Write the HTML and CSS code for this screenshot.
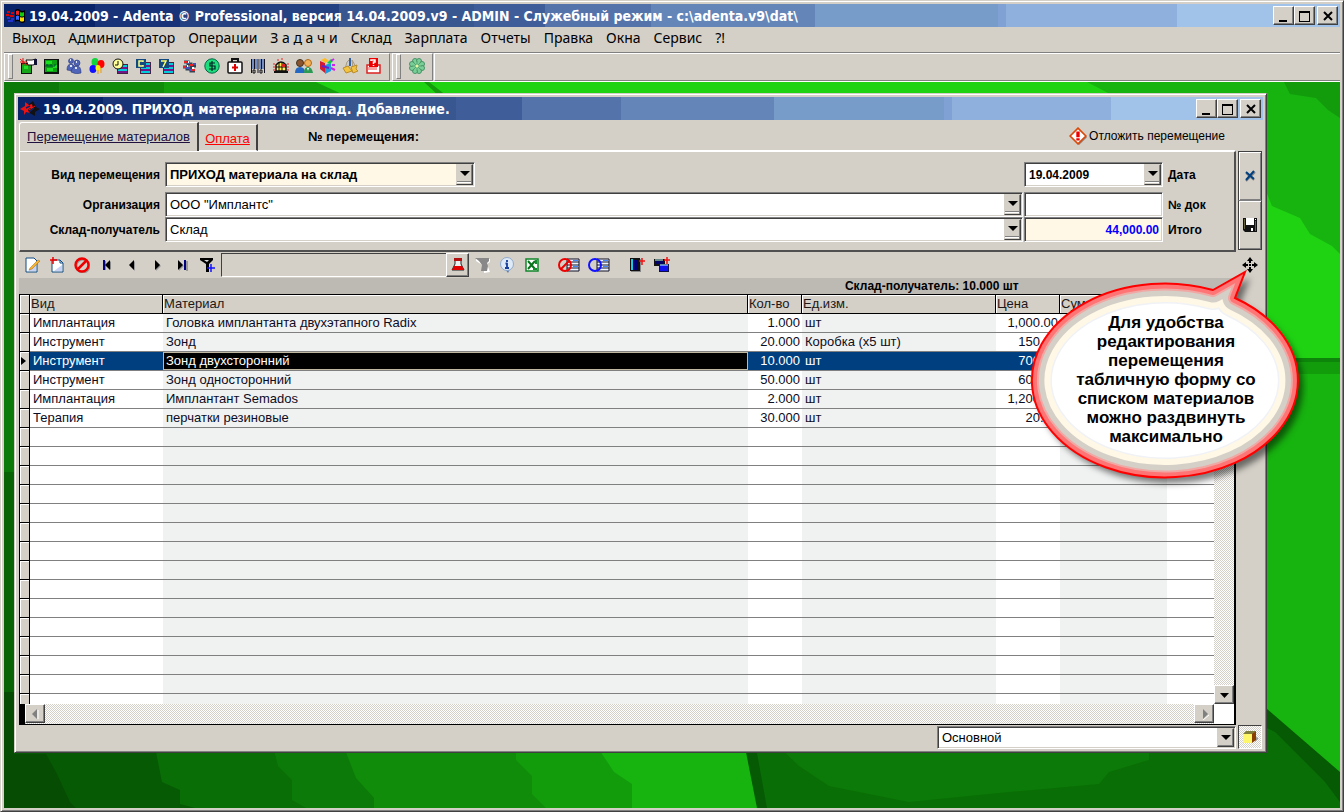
FILE: index.html
```html
<!DOCTYPE html>
<html lang="ru">
<head>
<meta charset="utf-8">
<title>Adenta Professional</title>
<link rel="stylesheet" href="styles.css">
</head>
<body>
<div class="app frame">
  <header class="titlebar">
    <svg class="title-icon" viewBox="0 0 20 16"><path d="M9 2q3-2 5 0t5 0v12q-3 2-5 0t-5 0z" fill="#000"/><path d="M10 3q2-1 3 0v4q-2-1-3 0z" fill="#e22"/><path d="M14 4q2 1 4 0v4q-2 1-4 0z" fill="#1c1"/><path d="M10 8q2-1 3 0v4q-2-1-3 0z" fill="#36f"/><path d="M14 9q2 1 4 0v4q-2 1-4 0z" fill="#fd0"/><path d="M1 4h3M5 5h3M0 7h3M4 8h4" stroke="#d00" stroke-width="2"/><path d="M1 10h3M5 11h3M2 13h5" stroke="#23c" stroke-width="2"/></svg>
    <h1 class="title-text">19.04.2009 - Adenta © Professional, версия 14.04.2009.v9 - ADMIN - Служебный режим - c:\adenta.v9\dat\</h1>
    <div class="win-buttons">
      <button class="win-btn" aria-label="Свернуть"><svg viewBox="0 0 14 14"><path d="M2 11h8v2H2z"/></svg></button>
      <button class="win-btn" aria-label="Развернуть"><svg viewBox="0 0 14 14"><path d="M1 2h11v11H1zM2 4v8h9V4z" fill-rule="evenodd"/></svg></button>
      <button class="win-btn win-close" aria-label="Закрыть"><svg viewBox="0 0 14 14"><path d="M3 3l8 8M11 3l-8 8" stroke="#000" stroke-width="2"/></svg></button>
    </div>
  </header>
  <nav class="menu">
    <button>Выход</button><button>Администратор</button><button>Операции</button><button>З а д а ч и</button><button>Склад</button><button>Зарплата</button><button>Отчеты</button><button>Правка</button><button>Окна</button><button>Сервис</button><button>?!</button>
  </nav>
  <div class="toolbars">
    <div class="toolbar toolbar-main">
      <button class="tool" aria-label="Настройка"><svg viewBox="0 0 18 16"><path d="M2 5h11v11H2z" fill="#111"/><path d="M3 6h9v9H3z" fill="#17a51a"/><path d="M5 8h4v3H5z" fill="#22e02a"/><path d="M7 2h6l4-1v5l-3 1H9z" fill="#fff" stroke="#111"/><path d="M15 1h3v6h-3z" fill="#113"/><path d="M1 1l7 6M4 0v7M1 4h7" stroke="#d11"/></svg></button>
      <button class="tool" aria-label="Карта"><svg viewBox="0 0 16 16"><path d="M1 1h15v15H1z" fill="#111"/><path d="M2 2h12v12H2z" fill="#0c9f14"/><path d="M3 3h6v3H3zM10 7h4v3h-4zM4 10h6v3H4z" fill="#18df20"/><path d="M3 9V7h2v2M7 9V7h2v2M11 9V7h2" fill="none" stroke="#053"/></svg></button>
      <button class="tool" aria-label="Пациенты"><svg viewBox="0 0 16 16"><g fill="#5165b8" stroke="#28387e" stroke-width=".6"><circle cx="5" cy="3" r="2.500"/><path d="M1 12q0-6 4-6 3 0 4 4l-2 3z"/><circle cx="11" cy="5" r="3"/><path d="M5 14q1-6 6-6 4 0 4 7-5 2-10-1z"/></g><path d="M4 2h1M10 4h1M4 8h2M9 10h2" stroke="#dfe6ff" stroke-width="2"/></svg></button>
      <button class="tool" aria-label="Шары"><svg viewBox="0 0 16 16"><ellipse cx="6" cy="4" rx="3.500" ry="4" fill="#12d43c"/><ellipse cx="12" cy="6" rx="3.500" ry="4" fill="#f00"/><ellipse cx="4" cy="11" rx="3.500" ry="4" fill="#11f"/><ellipse cx="9" cy="10" rx="2.500" ry="3" fill="#fe1"/><path d="M9 12v4M12 10v5" stroke="#e90"/></svg></button>
      <button class="tool" aria-label="Расписание"><svg viewBox="0 0 16 16"><path d="M5 6h11v10H5z" fill="#424"/><path d="M6 8h9M6 12h9" stroke="#0cd" stroke-width="2"/><path d="M6 10h9M6 14h9" stroke="#70188a" stroke-width="2"/><circle cx="6" cy="6" r="5" fill="#ff9" stroke="#111"/><path d="M6 3v4H3" fill="none" stroke="#111"/></svg></button>
      <button class="tool" aria-label="Карточки C"><svg viewBox="0 0 16 16"><path d="M5 4h11v12H5z" fill="#424"/><path d="M6 6h9M6 10h9M6 14h9" stroke="#0cd" stroke-width="2"/><path d="M6 8h9M6 12h9" stroke="#70188a" stroke-width="2"/><path d="M1 1h10v9H1z" fill="#124a80"/><path d="M8 4V3H4v5h4V7" fill="none" stroke="#ff8" stroke-width="1.500"/></svg></button>
      <button class="tool" aria-label="Карточки 7"><svg viewBox="0 0 16 16"><path d="M5 4h11v12H5z" fill="#424"/><path d="M6 6h9M6 10h9M6 14h9" stroke="#0cd" stroke-width="2"/><path d="M6 8h9M6 12h9" stroke="#70188a" stroke-width="2"/><path d="M1 1h10v9H1z" fill="#124a80"/><path d="M3 3h5L5 9" fill="none" stroke="#ff6" stroke-width="1.500"/></svg></button>
      <button class="tool" aria-label="Обмен"><svg viewBox="0 0 16 16"><path d="M3 4h4v2h3v2h5M2 9h4v2h4v2h4" fill="none" stroke="#345" stroke-width="3"/><path d="M3 4h3M9 7h3M2 9h3M10 12h4" stroke="#e22" stroke-width="2"/><path d="M6 5h3M12 6h3M5 10h4M8 12h2" stroke="#4450c0" stroke-width="2"/><path d="M7 4h1M6 8h1M11 10h2" stroke="#fff" stroke-width="2"/></svg></button>
      <button class="tool" aria-label="Касса"><svg viewBox="0 0 16 16"><circle cx="8" cy="8" r="7.200" fill="#1cdc7c" stroke="#064"/><path d="M11 5H6v3h5v3H5M8 3v10" fill="none" stroke="#022" stroke-width="1.200"/></svg></button>
      <button class="tool" aria-label="Аптечка"><svg viewBox="0 0 16 16"><path d="M5 4V1h6v3" fill="none" stroke="#111" stroke-width="2"/><rect x="1" y="4" width="14" height="11" rx="1" fill="#fff" stroke="#111" stroke-width="1.500"/><path d="M8 6v7M5 9.500h6" stroke="#d00" stroke-width="2"/></svg></button>
      <button class="tool" aria-label="Штрих-код"><svg viewBox="0 0 16 16"><path d="M3 1v10M6 1v10M10 1v10M13 1v10" stroke="#124aba"/><path d="M1.500 1v14M4.500 1v10M8 1v14M11.500 1v10M14.500 1v14" stroke="#112"/><path d="M3 12h2v3H3zM10 12h2v3h-2z" fill="none" stroke="#111"/></svg></button>
      <button class="tool" aria-label="Сигнал"><svg viewBox="0 0 16 16"><path d="M3 13V7q5-6 10 0v6z" fill="#fe5" stroke="#111" stroke-width="1.500"/><path d="M3 9h10M6 5v8M9 4v9" stroke="#111"/><path d="M1 14h14" stroke="#111" stroke-width="2"/><path d="M0 6h2M0 9h2M0 12h2M14 6h2M14 9h2M14 12h2M4 2h2M8 1h2" stroke="#e22"/><path d="M9 6h3v3H9z" fill="#d22"/></svg></button>
      <button class="tool" aria-label="Сотрудники"><svg viewBox="0 0 18 16"><circle cx="5" cy="5" r="3.500" fill="#8a5430" stroke="#432"/><path d="M0 15q0-6 5-6t5 6z" fill="#2468c4"/><circle cx="13" cy="5" r="3.500" fill="#f2b158" stroke="#b06818"/><path d="M9 15q0-6 4-6t5 6z" fill="#2b9a52"/><path d="M12 10h2l-1 3z" fill="#fff"/></svg></button>
      <button class="tool" aria-label="Графики"><svg viewBox="0 0 18 16"><path d="M2 3l5 2v10l-5-4z" fill="#d21a30"/><path d="M7 7l6-2v8l-6 3z" fill="#1c9be0"/><path d="M3 2l4-2 4 3-4 2z" fill="#fb2"/><path d="M9 5l4-4 2 2-3 3z" fill="#1c4"/><path d="M13 3l3-2M13 10l4 2M14 7h3" stroke="#c2e" stroke-width="2"/><path d="M4 8l7 2" stroke="#62c" stroke-width="2"/></svg></button>
      <button class="tool" aria-label="Инструменты"><svg viewBox="0 0 16 16"><path d="M5 4l2-2 1 4-2 4-3 1zM10 2l4 7-3 2z" fill="#c7cedb" stroke="#a89a80"/><path d="M1 10l5-2 4 5-6 2zM9 9l6-2-1 4 2 2-5 2z" fill="#f2c440" stroke="#ba8d28"/><path d="M8 0v8" stroke="#37639a" stroke-width="2"/></svg></button>
      <button class="tool" aria-label="Справка"><svg viewBox="0 0 16 16"><path d="M2 7h13v8H2z" fill="#fff" stroke="#d22" stroke-width="1.500"/><path d="M3 9h9v3H3z" fill="#f8a0a0"/><path d="M4 0h9v9H4z" fill="#e00"/><path d="M6 3V2h4v2H8.500v2M8.500 7v1" fill="none" stroke="#fff" stroke-width="1.500"/></svg></button>
    </div>
    <div class="toolbar">
      <button class="tool" aria-label="Клевер"><svg viewBox="0 0 16 16"><g fill="#79cf97" stroke="#4a9266"><circle cx="6" cy="3" r="2.500"/><circle cx="10" cy="3" r="2.500"/><circle cx="13" cy="6" r="2.500"/><circle cx="13" cy="10" r="2.500"/><circle cx="10" cy="13" r="2.500"/><circle cx="6" cy="13" r="2.500"/><circle cx="3" cy="10" r="2.500"/><circle cx="3" cy="6" r="2.500"/></g><circle cx="8" cy="8" r="4.500" fill="#79cf97"/><path d="M8 3v10M3 8h10M4 4l8 8M12 4l-8 8" stroke="#4c9968" stroke-width=".8"/><circle cx="8" cy="8" r="1.500" fill="#e8f5a0"/></svg></button>
    </div>
    <div class="toolbar toolbar-rest"></div>
  </div>
  <main class="desktop">
    <svg class="wallpaper" viewBox="0 0 1336 726" preserveAspectRatio="none" aria-hidden="true">
      <path d="M0 0h1336v726H0z" fill="#1fd313"/>
      <path d="M0 0h312l30 14H0z" fill="#14a00c"/><path d="M0 0h160v14H0z" fill="#108c0a"/><path d="M0 0h55v14H0z" fill="#0c7a08"/>
      <path d="M425 0l18 14h-8L420 0z" fill="#149c0c"/>
      <path d="M1083 0h253v172l-8-8-22-12-10-16-28-12-8-20-30-14v-70l-120-6z" fill="#17b30f"/>
      <path d="M1280 0h56v36l-12-8-12-12-26-4z" fill="#129c0c"/>
      <path d="M1255 276h81v450h-81z" fill="#17b30f"/><path d="M1255 276h81v16h-81z" fill="#129c0c"/><path d="M1255 276h81v4h-81z" fill="#0d850a"/>
      <path d="M1255 620l81 70v36h-81z" fill="#065a04"/><path d="M1255 642l16 8 50 50 15 20v6h-81z" fill="#0a6e06"/>
      <path d="M0 0h12v726H0z" fill="#0c7a08"/><path d="M0 390h12v336H0z" fill="#096406"/>
      <path d="M0 660h1262v66H0z" fill="#0a6e06"/>
      <path d="M770 660h375v18l-40 12-10 12-90 8-100 10-80-16-30-20z" fill="#0c7a08"/>
      <path d="M740 660l12 66h11l-12-66z" fill="#065a04"/>
      <path d="M0 660h740l13 66H0z" fill="#17b30f"/>
      <path d="M0 660h590l20 30 18 12v24H0z" fill="#129c0c"/>
      <path d="M0 660h512v18l16 16v18l14 14H0z" fill="#108c0a"/>
      <path d="M0 660h338l14 36 18 20v10H0z" fill="#0c7a08"/>
      <path d="M0 660h268l6 24 14 14v20l14 8H0z" fill="#096e06"/>
      <path d="M0 660h150l8 40 18 8v14l15 4H0z" fill="#065a04"/>
      <path d="M0 610h10v62h32l10 18 14 30 6 6H0z" fill="#064c03"/>
    </svg>
    <section class="window frame">
      <header class="titlebar">
        <svg class="title-icon" viewBox="0 0 20 16"><path d="M8 4l5-4 3 6 4 2-5 3v4l-7-4z" fill="#111"/><path d="M0 8l5-3V1l4 3 3-1 1 4h-3L8 9l2 3-4-1-2 3v-4z" fill="#e11"/><path d="M6 7l4-2M9 11l5-4" stroke="#0a246a" stroke-width="1.500"/><path d="M9 9l6-4" stroke="#e11"/></svg>
        <h2 class="title-text">19.04.2009. ПРИХОД материала на склад. Добавление.</h2>
        <div class="win-buttons">
          <button class="win-btn" aria-label="Свернуть окно"><svg viewBox="0 0 14 14"><path d="M2 11h8v2H2z"/></svg></button>
          <button class="win-btn" aria-label="Развернуть окно"><svg viewBox="0 0 14 14"><path d="M1 2h11v11H1zM2 4v8h9V4z" fill-rule="evenodd"/></svg></button>
          <button class="win-btn win-close" aria-label="Закрыть окно"><svg viewBox="0 0 14 14"><path d="M3 3l8 8M11 3l-8 8" stroke="#000" stroke-width="2"/></svg></button>
        </div>
      </header>
      <div class="tabs">
        <button class="tab tab-active">Перемещение материалов</button>
        <button class="tab tab-pay">Оплата</button>
        <span class="move-no">№ перемещения:</span>
        <button class="postpone"><svg viewBox="0 0 16 16"><path d="M9 2l7 7-7 7-7-7z" fill="#888"/><path d="M8 1l7 7-7 7-7-7z" fill="#fff" stroke="#d84a0c" stroke-width="1.500"/><path d="M8 4v5M8 10v2" stroke="#e00" stroke-width="3"/></svg>Отложить перемещение</button>
      </div>
      <div class="row">
        <form class="panel">
          <label for="kind">Вид перемещения</label>
          <div class="combo combo-kind"><select id="kind"><option>ПРИХОД материала на склад</option></select><span class="drop"></span></div>
          <div class="combo combo-date"><input id="date" value="19.04.2009"><span class="drop"></span></div>
          <label class="after" for="date">Дата</label>
          <label class="line-two" for="org">Организация</label>
          <div class="combo line-two"><select id="org"><option>ООО "Имплантс"</option></select><span class="drop"></span></div>
          <div class="combo line-two"><input id="doc" value=""></div>
          <label class="after line-two" for="doc">№ док</label>
          <label for="store">Склад-получатель</label>
          <div class="combo"><select id="store"><option>Склад</option></select><span class="drop"></span></div>
          <div class="combo combo-total"><input id="total" value="44,000.00" readonly></div>
          <label class="after" for="total">Итого</label>
        </form>
        <div class="side side-actions">
          <button aria-label="Отмена"><svg viewBox="0 0 16 16"><path d="M4 5l8 7M13 4l-9 9" stroke="#888" stroke-width="2"/><path d="M4 4l8 7M12 3l-8 9" stroke="#00407f" stroke-width="2"/></svg></button>
          <button aria-label="Сохранить"><svg viewBox="0 0 16 16"><path d="M1 1h14v14H3l-2-2z" fill="#111"/><path d="M2 2h1v10H2zM13 4h1v10h-1z" fill="#66623e"/><path d="M4 1h8v7H4z" fill="#fff"/><path d="M4 10h8v5H4z" fill="#111"/><path d="M9 11h2v3H9zM13 2h1v1h-1z" fill="#fff"/></svg></button>
        </div>
      </div>
      <div class="row">
        <div class="grid-tools">
          <button aria-label="Изменить"><svg viewBox="0 0 16 16"><path d="M2 1h8l3 3v11H2z" fill="#fff" stroke="#114a80"/><path d="M4 14l8-8v8z" fill="#c8d2f4"/><path d="M6 11l8-8 2 1-8 8-3 1z" fill="#f8b42c" stroke="#a66a16" stroke-width=".5"/></svg></button>
          <button aria-label="Добавить"><svg viewBox="0 0 16 16"><path d="M3 3h8l3 3v9H3z" fill="#fff" stroke="#114a80"/><path d="M5 14l8-6v6z" fill="#c8d2f4"/><path d="M11 3v3h3" fill="none" stroke="#114a80"/><path d="M4 0v7M1 3h7" stroke="#e00" stroke-width="1.500"/></svg></button>
          <button aria-label="Удалить"><svg viewBox="0 0 16 16"><circle cx="9" cy="9" r="6.500" fill="none" stroke="#999" stroke-width="2"/><path d="M3 13L13 3" stroke="#e00" stroke-width="2.500"/><circle cx="8" cy="8" r="6.500" fill="none" stroke="#f00000" stroke-width="2.400"/></svg></button>
          <button aria-label="Первая"><svg viewBox="0 0 16 16"><path d="M5 4h2v9H5zM12 4v9L8 8.500z" fill="#888"/><path d="M4 3h2v10H4z" fill="#000080"/><path d="M11 3v10L6 8z"/></svg></button>
          <button aria-label="Предыдущая"><svg viewBox="0 0 16 16"><path d="M11 4v10L6 9z" fill="#999"/><path d="M10 3v10L5 8z"/></svg></button>
          <button aria-label="Следующая"><svg viewBox="0 0 16 16"><path d="M7 4v10l5-5z" fill="#999"/><path d="M6 3v10l5-5z"/></svg></button>
          <button aria-label="Последняя"><svg viewBox="0 0 16 16"><path d="M5 4v10l5-5zM12 4h2v10h-2z" fill="#999"/><path d="M4 3v10l5-5z"/><path d="M10 3h2v10h-2z" fill="#000080"/></svg></button>
          <button aria-label="Фильтр"><svg viewBox="0 0 16 16"><path d="M1 1h13v2l-4 4v8H7V7L1 3z"/><path d="M5 3h5L8 5z" fill="#ddd"/><path d="M12 7v8M8 11h8" stroke="#11f" stroke-width="1.500"/></svg></button>
          <input class="filter-input" aria-label="Условие фильтра">
          <button class="flask" aria-label="Применить"><svg viewBox="0 0 16 16"><path d="M5 2h6v5l3 6H2l3-6z" fill="#eee" stroke="#222"/><path d="M4 1h8v3H4z" fill="#b01010"/><path d="M4 9h8l2 4H2z" fill="#e00000"/></svg></button>
          <button aria-label="Снять фильтр"><svg viewBox="0 0 16 16"><path d="M2 2h14v3l-3 2 1 3 2 5-6 1V9L2 4z" fill="#fff"/><path d="M1 1h14v3l-2 2 1 3-1 5H7l1-6-3-4z" fill="#888"/></svg></button>
          <button aria-label="Сведения"><svg viewBox="0 0 16 16"><path d="M6 12l3 4 2-4z" fill="#567db4"/><circle cx="8" cy="7" r="6.500" fill="#dfeaf8" stroke="#8fa9ca"/><path d="M8 3v2M8 6v5M6 11h4M6.500 6.500h2" stroke="#153f9b" stroke-width="1.800"/></svg></button>
          <button aria-label="Excel"><svg viewBox="0 0 16 16"><path d="M2 2h12v12H2z" fill="#fff" stroke="#11852a" stroke-width="1.500"/><path d="M4 4l7 8M11 4l-7 8" stroke="#08751d" stroke-width="2"/><path d="M11 3h2v4h-2zM9 11h4v2H9z" fill="#118c2d"/></svg></button>
          <button class="wide group-start" aria-label="Запретить список"><svg viewBox="0 0 22 16"><path d="M9 2h12v12H9z" fill="#eef5ff" stroke="#112"/><path d="M9 5h12M9 8h12M9 11h12" stroke="#112"/><path d="M15 3.500h5M15 9.500h5" stroke="#48f"/><path d="M3 12L11 4" stroke="#e00" stroke-width="2"/><circle cx="7" cy="8" r="6" fill="none" stroke="#e00" stroke-width="2"/></svg></button>
          <button class="wide" aria-label="Показать список"><svg viewBox="0 0 22 16"><path d="M9 2h12v12H9z" fill="#eef5ff" stroke="#112"/><path d="M9 5h12M9 8h12M9 11h12" stroke="#112"/><path d="M15 3.500h5M15 9.500h5" stroke="#48f"/><circle cx="7" cy="8" r="6" fill="none" stroke="#11f" stroke-width="2"/></svg></button>
          <button class="group-start" aria-label="Из справочника"><svg viewBox="0 0 16 16"><path d="M2 2h10v13H2z" fill="#888"/><path d="M1 1h10v13H1z" fill="#111"/><path d="M2 2h2v11H2z" fill="#1cc9e6"/><path d="M4 3h5v10H4z" fill="#007"/><path d="M13 1v7M10 4h6" stroke="#e11" stroke-width="1.500"/></svg></button>
          <button aria-label="Группа"><svg viewBox="0 0 16 16"><path d="M0 2h11v7H0z" fill="#111"/><path d="M2 4h7v3H2z" fill="#006"/><path d="M1 3h8" stroke="#bff"/><path d="M5 7h10v8H5z" fill="#114"/><path d="M6 8h8v6H6z" fill="#11e"/><path d="M6 8h8" stroke="#bff"/><path d="M13 0v7M10 3h6" stroke="#e11" stroke-width="1.500"/></svg></button>
        </div>
        <div class="side"><button class="move" aria-label="Раздвинуть"><svg viewBox="0 0 16 16"><path d="M8 0l3 4H9v2H7V4H5zM8 16l3-4H9v-2H7v2H5zM0 8l4-3v2h2v2H4v2zM16 8l-4-3v2h-2v2h2v2zM7 7h2v2H7z"/></svg></button></div>
      </div>
      <div class="row row-grid">
        <div class="grid-wrap">
          <div class="band"><span>Склад-получатель: 10.000 шт</span></div>
          <div class="grid">
            <div class="rows">
              <table>
                <colgroup><col class="c-mark"><col class="c-kind"><col><col class="c-qty"><col class="c-unit"><col class="c-price"><col class="c-sum"><col class="c-rest"></colgroup>
                <thead><tr><th></th><th>Вид</th><th>Материал</th><th>Кол-во</th><th>Ед.изм.</th><th>Цена</th><th>Сумма</th><th></th></tr></thead>
                <tbody>
                  <tr><th></th><td>Имплантация</td><td>Головка имплантанта двухэтапного Radix</td><td>1.000</td><td>шт</td><td>1,000.00</td><td></td><td></td></tr>
                  <tr><th></th><td>Инструмент</td><td>Зонд</td><td>20.000</td><td>Коробка (х5 шт)</td><td>150.00</td><td></td><td></td></tr>
                  <tr class="current"><th><svg viewBox="0 0 6 8"><path d="M0 0l5 4-5 4z"/></svg></th><td>Инструмент</td><td>Зонд двухсторонний</td><td>10.000</td><td>шт</td><td>700.00</td><td></td><td></td></tr>
                  <tr><th></th><td>Инструмент</td><td>Зонд односторонний</td><td>50.000</td><td>шт</td><td>600.00</td><td></td><td></td></tr>
                  <tr><th></th><td>Имплантация</td><td>Имплантант Semados</td><td>2.000</td><td>шт</td><td>1,200.00</td><td></td><td></td></tr>
                  <tr><th></th><td>Терапия</td><td>перчатки резиновые</td><td>30.000</td><td>шт</td><td>20.00</td><td></td><td></td></tr>
                  <tr><th></th><td></td><td></td><td></td><td></td><td></td><td></td><td></td></tr>
                  <tr><th></th><td></td><td></td><td></td><td></td><td></td><td></td><td></td></tr>
                  <tr><th></th><td></td><td></td><td></td><td></td><td></td><td></td><td></td></tr>
                  <tr><th></th><td></td><td></td><td></td><td></td><td></td><td></td><td></td></tr>
                  <tr><th></th><td></td><td></td><td></td><td></td><td></td><td></td><td></td></tr>
                  <tr><th></th><td></td><td></td><td></td><td></td><td></td><td></td><td></td></tr>
                  <tr><th></th><td></td><td></td><td></td><td></td><td></td><td></td><td></td></tr>
                  <tr><th></th><td></td><td></td><td></td><td></td><td></td><td></td><td></td></tr>
                  <tr><th></th><td></td><td></td><td></td><td></td><td></td><td></td><td></td></tr>
                  <tr><th></th><td></td><td></td><td></td><td></td><td></td><td></td><td></td></tr>
                  <tr><th></th><td></td><td></td><td></td><td></td><td></td><td></td><td></td></tr>
                  <tr><th></th><td></td><td></td><td></td><td></td><td></td><td></td><td></td></tr>
                  <tr><th></th><td></td><td></td><td></td><td></td><td></td><td></td><td></td></tr>
                  <tr><th></th><td></td><td></td><td></td><td></td><td></td><td></td><td></td></tr>
                  <tr><th></th><td></td><td></td><td></td><td></td><td></td><td></td><td></td></tr>
                </tbody>
              </table>
            </div>
            <div class="vscroll"><button aria-label="Вниз"><svg viewBox="0 0 16 16"><path d="M4 6h9l-4.500 5z"/></svg></button></div>
            <div class="hscroll">
              <button aria-label="Влево"><svg viewBox="0 0 16 16"><path d="M11 4v9" stroke="#fff"/><path d="M10 3v10L5 8z" fill="#808080"/></svg></button>
              <button aria-label="Вправо"><svg viewBox="0 0 16 16"><path d="M7 14l6-5" stroke="#fff"/><path d="M7 3v10l5-5z" fill="#808080"/></svg></button>
            </div>
            <div class="corner"></div>
          </div>
        </div>
        <div class="side"></div>
      </div>
      <footer class="row footer">
        <div class="combo combo-base"><select aria-label="Вид таблицы"><option>Основной</option></select><span class="drop"></span></div>
        <div class="side"><button class="cube" aria-label="Объем"><svg viewBox="0 0 16 16"><path d="M13 13l4-4-3-1z" fill="#999"/><path d="M1 5l3-3h10l-3 3z" fill="#80803c"/><path d="M1 5h9v9H1z" fill="#fff76a"/><path d="M10 5l4-3v9l-4 3z" fill="#8a3e00"/></svg></button></div>
      </footer>
    </section>
    <aside class="callout">
      <svg viewBox="0 0 278 222" aria-hidden="true">
        <defs><clipPath id="bubble"><path d="M183 21L215 3 205 29A133 97 0 1 1 183 21z"/></clipPath></defs>
        <path class="callout-shadow" d="M183 21L215 3 205 29A133 97 0 1 1 183 21z"/>
        <g clip-path="url(#bubble)" stroke-linejoin="round">
          <path d="M183 21L215 3 205 29A133 97 0 1 1 183 21z" fill="#fff" stroke="#f0f2f6" stroke-width="40"/>
          <path d="M183 21L215 3 205 29A133 97 0 1 1 183 21z" fill="none" stroke="#fff8e6" stroke-width="37"/>
          <path d="M183 21L215 3 205 29A133 97 0 1 1 183 21z" fill="none" stroke="#d4d0c8" stroke-width="25"/>
          <path d="M183 21L215 3 205 29A133 97 0 1 1 183 21z" fill="none" stroke="#f0a8a4" stroke-width="14"/>
          <path d="M183 21L215 3 205 29A133 97 0 1 1 183 21z" fill="none" stroke="#ff7474" stroke-width="10"/>
        </g>
        <path d="M183 21L215 3 205 29A133 97 0 1 1 183 21z" fill="none" stroke="#f00" stroke-width="2"/>
      </svg>
      <p>Для удобства<br>редактирования<br>перемещения<br>табличную форму со<br>списком материалов<br>можно раздвинуть<br>максимально</p>
    </aside>
  </main>
</div>
</body>
</html>
```
FILE: styles.css
```css
* { box-sizing: border-box; }
body {
  margin: 0;
  font: 12px/14px "Liberation Sans", Arial, sans-serif;
  color: #000;
  background: #d4d0c8;
}
button, input, select {
  font: inherit;
  color: inherit;
  margin: 0;
  padding: 0;
  border: 0;
  border-radius: 0;
  background: none;
  appearance: none;
  outline: 0;
}
svg { display: block; flex: none; }

.frame {
  background: #d4d0c8;
  border: 1px solid;
  border-color: #d4d0c8 #404040 #404040 #d4d0c8;
  box-shadow: inset 1px 1px #fff, inset -1px -1px #808080;
  padding: 3px;
  display: flex;
  flex-direction: column;
}
.app { min-height: 100vh; }

.titlebar {
  display: flex;
  align-items: center;
  flex: none;
  height: 23px;
  padding: 0 2px;
  background: linear-gradient(90deg, #0a246a 6.8%, #183377 0 13.2%, #244182 0 25.1%, #385690 0 35.2%, #3f5d98 0 40.5%, #5473ab 0 48.4%, #6485b8 0 60.7%, #789cca 0 74.4%, #80a1d4 0 75%, #8fb0dc 0 87.8%, #a1c3ea 0);
}
.title-icon { width: 20px; height: 16px; }
.title-text {
  flex: 1;
  margin: 0;
  padding-left: 3px;
  font: bold 14px/22px "DejaVu Sans Condensed", "DejaVu Sans", sans-serif;
  color: #fff;
  white-space: nowrap;
  overflow: hidden;
}
.win-buttons { display: flex; }
.win-btn {
  width: 21px;
  height: 19px;
  display: grid;
  place-items: center;
  background: #d4d0c8;
  border: 1px solid;
  border-color: #fff #404040 #404040 #fff;
  box-shadow: inset -1px -1px #808080;
}
.win-btn svg { width: 14px; height: 14px; }
.win-close { margin-left: 2px; }

.menu {
  display: flex;
  flex: none;
  align-items: flex-start;
  height: 25px;
  padding-left: 8px;
  gap: 13px;
  font: 14px/22px "Noto Sans", sans-serif;
}
.toolbars {
  display: flex;
  flex: none;
  height: 30px;
  border-top: 1px solid #808080;
  border-bottom: 1px solid #fff;
}
.toolbar {
  display: flex;
  align-items: center;
  padding: 0 0 2px 3px;
  border: 1px solid;
  border-color: #fff #808080 #808080 #fff;
}
.toolbar::before {
  content: "";
  width: 3px;
  height: 23px;
  flex: none;
  border: 1px solid;
  border-color: #fff #808080 #808080 #fff;
}
.toolbar-main { width: 386px; margin-right: 2px; }
.toolbar:nth-child(2) { width: 41px; margin-right: 1px; }
.toolbar:nth-child(2) .tool { margin-left: 4px; }
.toolbar-rest { flex: 1; border-right: 0; }
.toolbar-rest::before { display: none; }
.tool { width: 23px; height: 24px; flex: none; display: grid; place-items: center; }
.toolbar-main .tool:first-child { margin-left: 3px; }
.tool svg { height: 16px; }

.desktop {
  position: relative;
  flex: 1;
  display: flex;
  padding: 11px 73px 55px 10px;
}
.wallpaper {
  position: absolute;
  inset: 0;
  width: 100%;
  height: 100%;
}
.window { position: relative; flex: 1; min-width: 0; }

.tabs {
  display: flex;
  flex: none;
  align-items: flex-end;
  height: 31px;
  padding-left: 1px;
  font-size: 13px;
}
.tab {
  border-top: 1px solid #fff;
  border-right: 2px solid #404040;
  text-decoration: underline;
}
.tab-active {
  width: 180px;
  height: 29px;
  border-left: 1px solid #fff;
  border-radius: 3px 0 0 0;
  color: #201040;
}
.tab-pay {
  width: 59px;
  height: 27px;
  padding-top: 3px;
  border-bottom: 1px solid #fff;
  color: #f00;
}
.move-no {
  flex: 1;
  align-self: stretch;
  padding-left: 50px;
  font-weight: bold;
  line-height: 34px;
  border-bottom: 1px solid #fff;
}
.postpone {
  display: flex;
  align-items: center;
  gap: 2px;
  align-self: stretch;
  padding: 2px 10px 0 0;
  margin-right: 28px;
  border-bottom: 1px solid #fff;
  font-size: 12px;
}
.postpone svg { width: 18px; height: 18px; }

.row { display: flex; flex: none; padding-left: 1px; }
.side { width: 27px; flex: none; }
.panel {
  flex: 1;
  min-width: 0;
  display: grid;
  grid-template-columns: 145px 1fr 140px 70px;
  align-items: center;
  padding: 10px 0 8px;
  border-top: 1px solid #fff;
  border-left: 1px solid #fff;
  border-right: 2px solid #505050;
  border-bottom: 2px solid #505050;
  font-weight: bold;
}
.panel label { text-align: right; padding-right: 5px; }
.panel label.after { text-align: left; padding: 0 0 0 4px; }
.panel .line-two { margin-top: 5px; }

.combo {
  display: flex;
  height: 25px;
  margin-right: 1px;
  background: #fff;
  border: 1px solid;
  border-color: #808080 #fff #fff #808080;
  box-shadow: inset 1px 1px #404040, inset -1px -1px #d4d0c8;
  padding: 1px 1px 1px 2px;
  font-weight: normal;
}
.combo select, .combo input { flex: 1; min-width: 0; padding: 0 2px; }
.combo select, .combo input { font-size: 13px; }
.combo-kind { width: 310px; background: #fff8e6; font-weight: bold; }
.combo-date { font-weight: bold; }
.combo-total { background: #fff8e6; color: #00f; font-weight: bold; }
.combo-total input { text-align: right; padding-right: 2px; }
.panel .combo-date input, .panel .combo-total input { font-size: 12px; }
.drop {
  width: 17px;
  flex: none;
  display: flex;
  justify-content: center;
  background: linear-gradient(#d4d0c8 16px, #808080 16px 17px, #fff 17px 18px, #d4d0c8 18px);
  border: 1px solid;
  border-color: #d4d0c8 #404040 #404040 #d4d0c8;
  box-shadow: inset -1px 0 #808080;
}
.drop::before {
  content: "";
  align-self: flex-start;
  margin-top: 6px;
  border: 5px solid transparent;
  border-top-color: #000;
  border-bottom: 0;
}

.side-actions {
  display: flex;
  flex-direction: column;
  margin-bottom: 2px;
  padding: 0 1px 0 2px;
}
.side-actions button {
  flex: 1;
  display: grid;
  place-items: center;
  border: 1px solid;
  border-color: #404040 #404040 #808080;
  box-shadow: inset 1px 1px #fff, inset -1px -1px #808080;
}
.side-actions button + button { border-top: 0; border-bottom-color: #404040; }
.side-actions svg { width: 16px; height: 16px; }

.grid-tools {
  flex: 1;
  min-width: 0;
  display: flex;
  align-items: center;
  height: 26px;
}
.grid-tools button {
  width: 25px;
  height: 25px;
  display: grid;
  place-items: center;
}
.grid-tools svg { height: 16px; }
.grid-tools .wide { width: 30px; }
.grid-tools .group-start { margin-left: 10px; }
.filter-input {
  width: 225px;
  height: 24px;
  margin-left: 2px;
  border-left: 1px solid #404040;
  border-top: 1px solid #404040;
  border-bottom: 1px solid #fff;
}
.grid-tools .flask {
  width: 23px;
  height: 24px;
  border: 1px solid;
  border-color: #fff #404040 #404040 #fff;
  box-shadow: inset -1px -1px #808080;
}
.move { width: 27px; height: 26px; display: grid; place-items: center; }
.move svg { width: 16px; height: 16px; }

.row-grid { flex: 1; min-height: 0; }
.grid-wrap { flex: 1; min-width: 0; display: flex; flex-direction: column; }
.band {
  display: flex;
  flex: none;
  justify-content: flex-end;
  background: #bdbab3;
  font-weight: bold;
  line-height: 16px;
}
.band span { width: 50%; text-align: center; }
.grid {
  flex: 1;
  min-height: 0;
  display: grid;
  grid-template: minmax(0, 1fr) 20px / minmax(0, 1fr) 20px;
  background: #fff;
  border: 1px solid #000;
  border-right-width: 2px;
}
.rows { overflow: hidden; contain: size; }
table {
  width: 100%;
  table-layout: fixed;
  border-spacing: 0;
  font-size: 13px;
  line-height: 16px;
}
.c-mark { width: 10px; }
.c-kind { width: 133px; }
.c-qty { width: 54px; }
.c-unit { width: 194px; }
.c-price { width: 64px; }
.c-sum { width: 107px; }
.c-rest { width: 47px; }
th, td { height: 19px; padding: 0 3px; white-space: nowrap; overflow: hidden; }
th {
  font-weight: normal;
  text-align: left;
  padding: 0 1px;
  background: #d4d0c8;
  border-right: 1px solid #000;
  border-bottom: 1px solid #000;
  box-shadow: inset 1px 1px #fff;
  color: #201818;
}
th svg { width: 6px; height: 8px; }
td { border-bottom: 1px solid #808080; color: #0c0c24; }
td:nth-child(odd) { background: #f0f2f1; }
td:nth-child(4), td:nth-child(6) { text-align: right; padding-right: 2px; }
.current td { background: #003f7f; color: #fff; }
.current td:nth-child(3) { background: #000; box-shadow: inset 0 0 0 1px #c0b8a0; }

.vscroll, .hscroll {
  display: flex;
  background: repeating-conic-gradient(#d4d0c8 0 25%, #fff 0 50%) 0 0 / 2px 2px;
}
.vscroll { align-items: flex-end; }
.hscroll { justify-content: space-between; border-left: 5px solid #000; }
.vscroll button, .hscroll button {
  width: 20px;
  height: 19px;
  display: grid;
  place-items: center;
  background: #d4d0c8;
  border: 1px solid;
  border-color: #fff #404040 #404040 #fff;
  box-shadow: inset -1px -1px #808080;
}
.vscroll svg, .hscroll svg { width: 16px; height: 16px; }

.footer { height: 24px; justify-content: flex-end; }
.combo-base { width: 299px; height: 23px; margin: 1px 0 0; font-size: 13px; }
.cube {
  width: 24px;
  height: 24px;
  margin-left: 2px;
  display: grid;
  place-items: center;
  background: repeating-conic-gradient(#d4d0c8 0 25%, #fff 0 50%) 0 0 / 2px 2px;
  border: 1px solid;
  border-color: #404040 #fff #fff #404040;
}
.cube svg { width: 16px; height: 16px; }

.callout {
  position: absolute;
  top: 187px;
  right: 32px;
  width: 278px;
}
.callout svg { width: 278px; height: 222px; }
.callout-shadow { fill: #000; filter: drop-shadow(5px 6px 3px rgba(0, 0, 0, .5)); }
.callout p {
  position: absolute;
  inset: 44px 6px auto 0;
  margin: 0;
  padding: 0;
  text-align: center;
  font: bold 17px/19px "Liberation Sans", Arial, sans-serif;
}
```
